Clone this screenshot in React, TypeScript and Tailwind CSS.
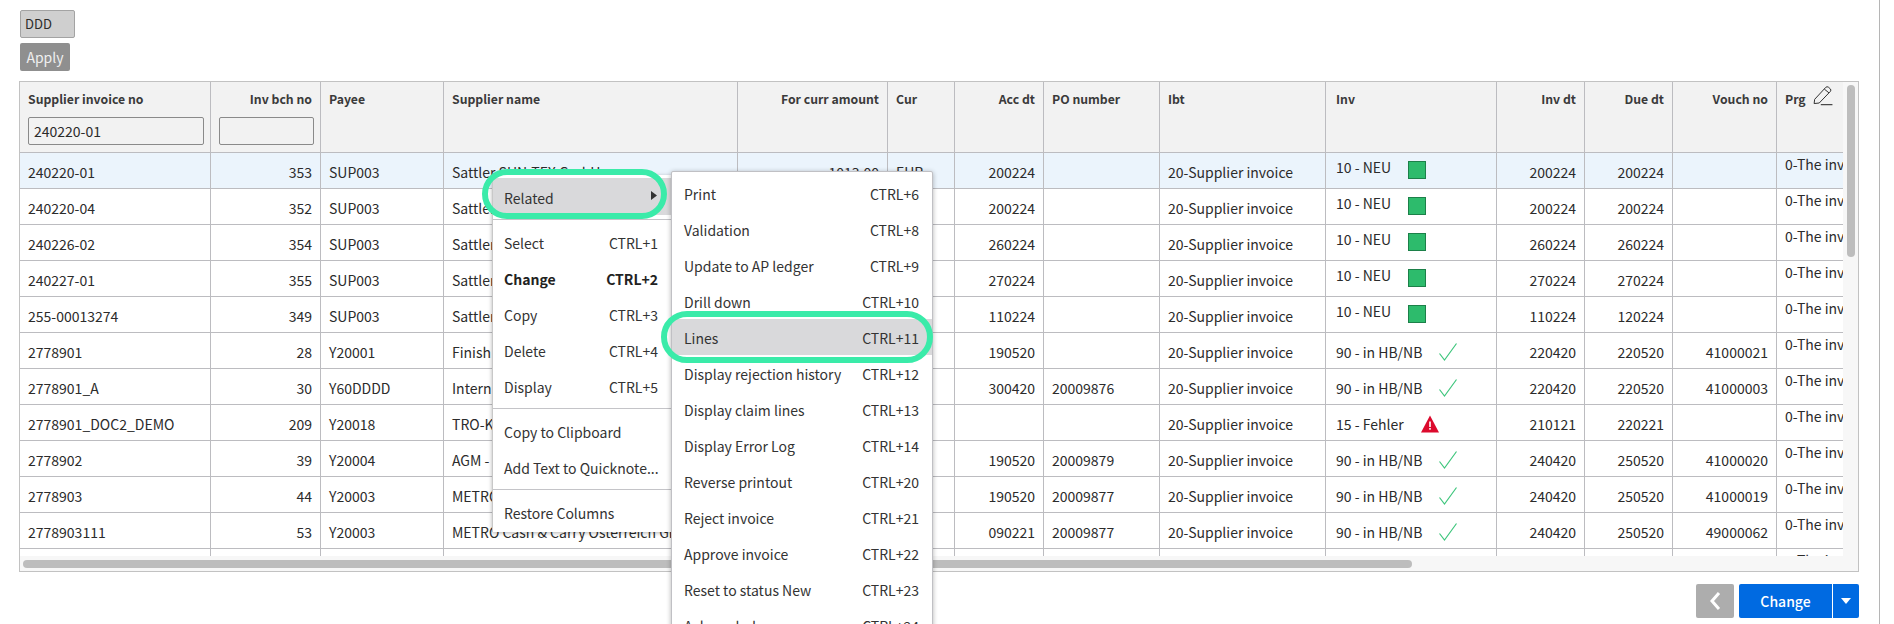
import React from "react";

type Row = { no: string; bch: string; payee: string; name: string; amt: string; cur: string; acc: string; po: string; inv: string; st: "new" | "ok" | "err"; invDt: string; due: string; vouch: string };

const S = "Sattler SUN-TEX GmbH";
const M = "METRO Cash & Carry Österreich GmbH";
const rows: Row[] = [
  { no: "240220-01", bch: "353", payee: "SUP003", name: S, amt: "1013.00", cur: "EUR", acc: "200224", po: "", inv: "10 - NEU", st: "new", invDt: "200224", due: "200224", vouch: "" },
  { no: "240220-04", bch: "352", payee: "SUP003", name: S, amt: "", cur: "", acc: "200224", po: "", inv: "10 - NEU", st: "new", invDt: "200224", due: "200224", vouch: "" },
  { no: "240226-02", bch: "354", payee: "SUP003", name: S, amt: "", cur: "", acc: "260224", po: "", inv: "10 - NEU", st: "new", invDt: "260224", due: "260224", vouch: "" },
  { no: "240227-01", bch: "355", payee: "SUP003", name: S, amt: "", cur: "", acc: "270224", po: "", inv: "10 - NEU", st: "new", invDt: "270224", due: "270224", vouch: "" },
  { no: "255-00013274", bch: "349", payee: "SUP003", name: S, amt: "", cur: "", acc: "110224", po: "", inv: "10 - NEU", st: "new", invDt: "110224", due: "120224", vouch: "" },
  { no: "2778901", bch: "28", payee: "Y20001", name: "Finish", amt: "", cur: "", acc: "190520", po: "", inv: "90 - in HB/NB", st: "ok", invDt: "220420", due: "220520", vouch: "41000021" },
  { no: "2778901_A", bch: "30", payee: "Y60DDDD", name: "Intern", amt: "", cur: "", acc: "300420", po: "20009876", inv: "90 - in HB/NB", st: "ok", invDt: "220420", due: "220520", vouch: "41000003" },
  { no: "2778901_DOC2_DEMO", bch: "209", payee: "Y20018", name: "TRO-K", amt: "", cur: "", acc: "", po: "", inv: "15 - Fehler", st: "err", invDt: "210121", due: "220221", vouch: "" },
  { no: "2778902", bch: "39", payee: "Y20004", name: "AGM - ", amt: "", cur: "", acc: "190520", po: "20009879", inv: "90 - in HB/NB", st: "ok", invDt: "240420", due: "250520", vouch: "41000020" },
  { no: "2778903", bch: "44", payee: "Y20003", name: "METRO", amt: "", cur: "", acc: "190520", po: "20009877", inv: "90 - in HB/NB", st: "ok", invDt: "240420", due: "250520", vouch: "41000019" },
  { no: "2778903111", bch: "53", payee: "Y20003", name: M, amt: "", cur: "", acc: "090221", po: "20009877", inv: "90 - in HB/NB", st: "ok", invDt: "240420", due: "250520", vouch: "49000062" },
  { no: "", bch: "", payee: "", name: "", amt: "", cur: "", acc: "", po: "", inv: "", st: "new", invDt: "", due: "", vouch: "" },
];

const th = "border-r border-b border-[#bcbcc0] px-2 pt-[8px] align-top font-bold text-[12.25px] leading-[18px] text-[#3a3a3a] whitespace-nowrap overflow-hidden";
const td = "border-r border-b border-[#bcbcc0] px-2 pt-[2px] h-9 whitespace-nowrap overflow-hidden text-[14px] leading-[20px] text-[#2b2b2b]";

function Check() {
  return (
    <svg width="18" height="18" viewBox="0 0 18 18" fill="none" className="shrink-0">
      <path d="M0.5 10.5 L5.5 17 L17.5 0.5" stroke="#3fc67d" strokeWidth="1.2" />
    </svg>
  );
}

function Warn() {
  return (
    <svg width="18" height="18" viewBox="0 0 18 18" className="shrink-0">
      <path d="M9 0.5 L18 17.5 L0 17.5 Z" fill="#dc0a2d" />
      <rect x="8.2" y="6.5" width="1.6" height="5.5" fill="#fff" />
      <rect x="8.2" y="13" width="1.6" height="1.7" fill="#fff" />
    </svg>
  );
}

function Status({ r }: { r: Row }) {
  if (!r.inv) return null;
  if (r.st === "new")
    return (
      <div className="flex items-start gap-[17px] -translate-y-px">
        <span className="-mt-[5px]">{r.inv}</span>
        <span className="w-[18px] h-[18px] -mt-[1px] bg-[#2dbb6c] border border-[#1c8049] block" />
      </div>
    );
  return (
    <div className="flex items-center gap-[17px]">
      <span>{r.inv}</span>
      {r.st === "ok" ? <Check /> : <Warn />}
    </div>
  );
}

function MenuItem({ l, r, bold, hi, arrow, tall }: { l: string; r?: string; bold?: boolean; hi?: boolean; arrow?: boolean; tall?: boolean }) {
  return (
    <div className={`flex items-center justify-between ${arrow ? "h-[37px] pt-[2px]" : "h-9"} ${tall ? "pl-3 pr-[13px] pt-[2px]" : "pl-[11px] pr-[13px]"} ${hi ? "bg-[#d9d9db]" : ""} ${bold ? "font-bold text-[#222]" : "text-[#333]"} text-[14px] leading-5 whitespace-nowrap`}>
      <span>{l}</span>
      {r && <span>{r}</span>}
      {arrow && (
        <svg width="6" height="9" viewBox="0 0 6 9" className="-mt-[4px] mr-px">
          <path d="M0 0 L6 4.5 L0 9 Z" fill="#333" />
        </svg>
      )}
    </div>
  );
}

const sub: [string, string][] = [
  ["Print", "CTRL+6"],
  ["Validation", "CTRL+8"],
  ["Update to AP ledger", "CTRL+9"],
  ["Drill down", "CTRL+10"],
  ["Lines", "CTRL+11"],
  ["Display rejection history", "CTRL+12"],
  ["Display claim lines", "CTRL+13"],
  ["Display Error Log", "CTRL+14"],
  ["Reverse printout", "CTRL+20"],
  ["Reject invoice", "CTRL+21"],
  ["Approve invoice", "CTRL+22"],
  ["Reset to status New", "CTRL+23"],
  ["Acknowledge", "CTRL+24"],
];

export default function App() {
  return (
    <div className="relative h-[624px] w-full overflow-hidden bg-white font-['Noto_Sans_CJK_SC','Source_Sans_Pro',sans-serif]">
      <div className="w-[1880px] h-full border-r border-[#b5b5b5] pt-[10px] pl-[19px]">
        <div className="pl-px flex flex-col items-start gap-[5px]">
          <div className="w-[55px] h-[28px] bg-[#cfcfcf] border border-[#a3a3a3] rounded-[2px] pl-[4px] text-[13px] leading-[26px] text-[#2b2b2b]">DDD</div>
          <button className="w-[50px] h-[28px] bg-[#8f8f8f] rounded-[2px] text-[14px] leading-[26px] text-[#efefef] text-center">Apply</button>
        </div>

        <div className="mt-[10px] w-[1840px] h-[491px] border border-[#c2c2c2] flex flex-col bg-[#f7f7f7]">
          <div className="flex flex-1 min-h-0">
            <div className="w-[1823px] overflow-hidden">
              <table className="table-fixed border-separate border-spacing-0 w-[1923px]">
                <colgroup>
                  <col className="w-[191px]" />
                  <col className="w-[110px]" />
                  <col className="w-[123px]" />
                  <col className="w-[294px]" />
                  <col className="w-[150px]" />
                  <col className="w-[67px]" />
                  <col className="w-[89px]" />
                  <col className="w-[116px]" />
                  <col className="w-[166px]" />
                  <col className="w-[171px]" />
                  <col className="w-[88px]" />
                  <col className="w-[88px]" />
                  <col className="w-[104px]" />
                  <col className="w-[166px]" />
                </colgroup>
                <thead>
                  <tr className="h-[71px] bg-[#f2f2f2]">
                    <th className={`${th} text-left`}>
                      <div>Supplier invoice no</div>
                      <input readOnly value="240220-01" className="mt-[9px] block w-[176px] h-[28px] border border-[#8a8a8a] rounded-[2px] bg-transparent px-[5px] font-normal text-[14px] text-[#2b2b2b] outline-none" />
                    </th>
                    <th className={`${th} text-right`}>
                      <div>Inv bch no</div>
                      <input readOnly value="" className="mt-[9px] block w-[95px] h-[28px] border border-[#8a8a8a] rounded-[2px] bg-transparent outline-none" />
                    </th>
                    <th className={`${th} text-left`}>Payee</th>
                    <th className={`${th} text-left`}>Supplier name</th>
                    <th className={`${th} text-right`}>For curr amount</th>
                    <th className={`${th} text-left`}>Cur</th>
                    <th className={`${th} text-right`}>Acc dt</th>
                    <th className={`${th} text-left`}>PO number</th>
                    <th className={`${th} text-left`}>Ibt</th>
                    <th className={`${th} !pl-[10px] text-left`}>Inv</th>
                    <th className={`${th} text-right`}>Inv dt</th>
                    <th className={`${th} text-right`}>Due dt</th>
                    <th className={`${th} text-right`}>Vouch no</th>
                    <th className={`${th} text-left`}>
                      <div className="flex items-start gap-[7px]">
                        <span>Prg</span>
                        <svg width="20" height="20" viewBox="0 0 18 18" fill="none" className="-mt-[4px]">
                          <path d="M1.5 12 L11.5 1.2 Q12.6 0.2 13.8 1 L15.6 2.6 Q16.6 3.6 15.7 4.8 L5.6 15.3 L1 15.8 Z" stroke="#333" strokeWidth="0.9" />
                          <path d="M10.2 2.8 L14.4 6.2" stroke="#333" strokeWidth="0.9" />
                          <path d="M7 16.8 H17.5" stroke="#333" strokeWidth="1" />
                        </svg>
                      </div>
                    </th>
                  </tr>
                </thead>
                <tbody>
                  {rows.map((r, i) => (
                    <tr key={i} className={i === 0 ? "bg-[#ebf4fc]" : "bg-white"}>
                      <td className={td}>{r.no}</td>
                      <td className={`${td} text-right`}>{r.bch}</td>
                      <td className={td}>{r.payee}</td>
                      <td className={td}>{r.name}</td>
                      <td className={`${td} text-right`}>{r.amt}</td>
                      <td className={td}>{r.cur}</td>
                      <td className={`${td} text-right`}>{r.acc}</td>
                      <td className={td}>{r.po}</td>
                      <td className={td}>{r.no ? "20-Supplier invoice" : ""}</td>
                      <td className={`${td} !pl-[10px]`}><Status r={r} /></td>
                      <td className={`${td} text-right`}>{r.invDt}</td>
                      <td className={`${td} text-right`}>{r.due}</td>
                      <td className={`${td} text-right`}>{r.vouch}</td>
                      <td className={`${td} !align-top !pt-[1px]`}>0-The invoice has no</td>
                    </tr>
                  ))}
                </tbody>
              </table>
            </div>
            <div className="flex-1 pt-[3px] pl-[4px]">
              <div className="w-2 h-[172px] rounded-[4px] bg-[#bdbdbd]" />
            </div>
          </div>
          <div className="h-[15px] pl-[3px] pt-[4px]">
            <div className="w-[1389px] h-2 rounded-[4px] bg-[#bdbdbd]" />
          </div>
        </div>

        <div className="mt-[12px] w-[1840px] flex justify-end">
          <button className="w-[38px] h-[34px] bg-[#adadad] rounded-[2px] flex items-center justify-center">
            <svg width="12" height="20" viewBox="0 0 12 20" fill="none">
              <path d="M10 2 L3 10 L10 18" stroke="#fff" strokeWidth="3" />
            </svg>
          </button>
          <button className="ml-[5px] w-[93px] h-[34px] bg-[#006ae1] rounded-l-[2px] text-white text-[14px] font-medium leading-[32px]">Change</button>
          <button className="ml-px w-[26px] h-[34px] bg-[#006ae1] rounded-r-[2px] flex items-center justify-center">
            <svg width="10" height="6" viewBox="0 0 10 6"><path d="M0 0 H10 L5 6 Z" fill="#fff" /></svg>
          </button>
        </div>
      </div>

      {/* Context menu */}
      <div className="absolute left-[492px] top-[175px] w-[179px] h-[357px] bg-white border-l border-[#c8c8c8] pt-[3px] shadow-[0_1px_4px_rgba(0,0,0,0.3)]">
        <MenuItem l="Related" hi arrow />
        <div className="mt-[4px] mb-[5px] h-px bg-[#c4c4c8]" />
        <MenuItem l="Select" r="CTRL+1" />
        <MenuItem l="Change" r="CTRL+2" bold />
        <MenuItem l="Copy" r="CTRL+3" />
        <MenuItem l="Delete" r="CTRL+4" />
        <MenuItem l="Display" r="CTRL+5" />
        <div className="mt-[3px] mb-[5px] h-px bg-[#c4c4c8]" />
        <MenuItem l="Copy to Clipboard" />
        <MenuItem l="Add Text to Quicknote..." />
        <div className="mt-[3px] mb-[5px] h-px bg-[#c4c4c8]" />
        <MenuItem l="Restore Columns" />
      </div>

      {/* Submenu */}
      <div className="absolute left-[671px] top-[171px] w-[262px] bg-white border border-[#c0c0c4] rounded-[2px] pt-[3px] shadow-[0_1px_5px_rgba(0,0,0,0.3)]">
        {sub.map(([l, r]) => (
          <MenuItem key={l} l={l} r={r} hi={l === "Lines"} tall />
        ))}
      </div>

      {/* Highlight outlines */}
      <div className="absolute left-[482px] top-[169px] w-[185px] h-[50px] rounded-[25px] border-[6px] border-[#3aeba9]" />
      <div className="absolute left-[661px] top-[311px] w-[272px] h-[52px] rounded-[26px] border-[6px] border-[#3aeba9]" />
    </div>
  );
}
